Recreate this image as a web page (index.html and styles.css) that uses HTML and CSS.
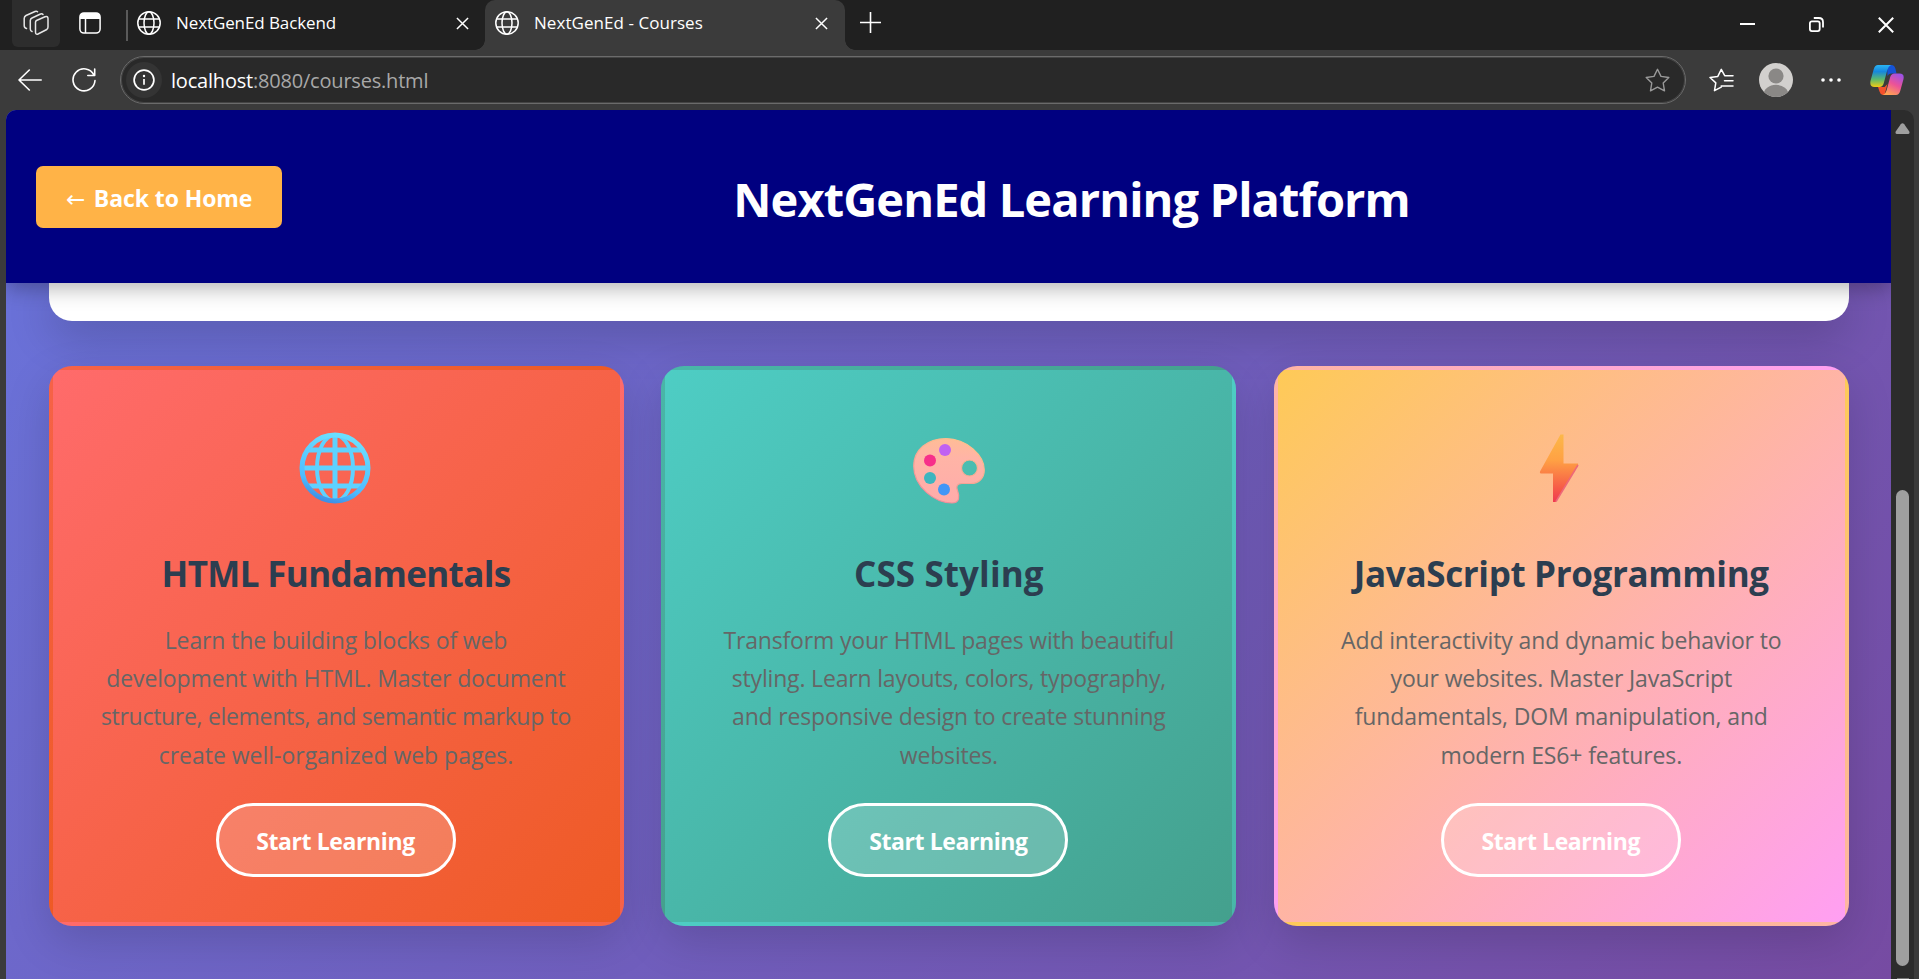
FILE: index.html
```html
<!DOCTYPE html>
<html lang="en">
<head>
<meta charset="utf-8">
<title>NextGenEd - Courses</title>
<link rel="stylesheet" href="styles.css">
</head>
<body>
<svg class="defs" aria-hidden="true">
  <defs>
    <symbol id="globe" viewBox="0 0 24 24"><g fill="none" stroke="#fff" stroke-width="1.5"><circle cx="12" cy="12" r="11.2"/><ellipse cx="12" cy="12" rx="5" ry="11.2"/><path d="M2 8h20M2 16h20"/></g></symbol>
    <symbol id="x" viewBox="0 0 14 14"><path d="M1 1l12 12M13 1L1 13" fill="none" stroke="#fff" stroke-width="1.6"/></symbol>
  </defs>
</svg>
<div class="window">
  <div class="tabstrip">
    <div class="workspaces">
      <svg width="26" height="26" viewBox="0 0 26 26" fill="none" stroke="#e6e6e6" stroke-width="1.5" stroke-linejoin="round" stroke-linecap="round"><path d="M12.5 12.2Q12.5 11 13.5 10.5L22 6.8Q25 5.8 25 8.5V17Q25 18.700 23.800 19.500L15 24Q12.500 25 12.500 22Z"/><path d="M20 4.500Q19 3.200 17.500 4L9 8Q7.300 8.800 7.300 10.500V19Q7.300 21 9 21.500"/><path d="M14.500 1.800Q13.500 .8 12 1.500L3 5.500Q1.200 6.500 1.200 8.500V15.500Q1.200 18 3.500 18.500"/></svg>
    </div>
    <svg class="tab-actions" width="22" height="22" viewBox="0 0 22 22"><rect x=".9" y=".9" width="20.200" height="20.200" rx="4" fill="none" stroke="#fff" stroke-width="1.500"/><path d="M1 7V4.500Q1 1 4.500 1h13Q21 1 21 4.500V7Z" fill="#fff"/><path d="M6.500 7v14" stroke="#fff" stroke-width="1.500"/></svg>
    <div class="divider"></div>
    <div class="tab tab-idle">
      <svg width="24" height="24"><use href="#globe"/></svg>
      <span class="tab-title">NextGenEd Backend</span>
      <svg width="13" height="13"><use href="#x"/></svg>
    </div>
    <div class="tab tab-active">
      <svg width="24" height="24"><use href="#globe"/></svg>
      <span class="tab-title tab-title-active">NextGenEd - Courses</span>
      <svg width="13" height="13"><use href="#x"/></svg>
    </div>
    <svg class="plus" width="21" height="21" viewBox="0 0 21 21"><path d="M10.500 0v21M0 10.500h21" stroke="#fff" stroke-width="1.600"/></svg>
    <div class="controls">
      <svg width="15" height="15" viewBox="0 0 15 15"><path d="M0 7h15" stroke="#fff" stroke-width="2"/></svg>
      <svg width="15" height="15" viewBox="0 0 15 15" fill="none" stroke="#fff" stroke-width="1.800"><rect x=".9" y="4.300" width="9.800" height="9.800" rx="2"/><path d="M4.800 1h5Q14 1 14 5.200V10.500"/></svg>
      <svg width="16" height="16" viewBox="0 0 16 16"><path d="M.8.8l14.400 14.400M15.200.8L.8 15.200" stroke="#fff" stroke-width="2"/></svg>
    </div>
  </div>

  <div class="toolbar">
    <svg class="nav-back" width="24" height="22" viewBox="0 0 24 22" fill="none" stroke="#fff" stroke-width="1.600" stroke-linecap="round" stroke-linejoin="round"><path d="M23.200 11H1M11.300 1L1 11l10.300 10"/></svg>
    <svg class="nav-reload" width="24" height="24" viewBox="0 0 24 24" fill="none" stroke="#fff" stroke-width="1.600" stroke-linecap="round" stroke-linejoin="round"><path d="M21.900 7A11 11 0 1 0 23 12.500M22.700 1v6.500H15.800"/></svg>
    <div class="address">
      <div class="site-info"><svg width="22" height="22" viewBox="0 0 22 22"><circle cx="11" cy="11" r="9.900" fill="none" stroke="#fff" stroke-width="1.700"/><path d="M11 10v5.800" stroke="#fff" stroke-width="1.700"/><circle cx="11" cy="7" r="1.200" fill="#fff"/></svg></div>
      <span class="url"><span class="host">localhost</span>:8080/courses.html</span>
      <svg class="star" width="25" height="24" viewBox="0 0 25 24"><path d="M12.500 1.300l3.500 7.100 7.800 1.100-5.600 5.500 1.300 7.800-7-3.700-7 3.700 1.300-7.800L1.200 9.500 9 8.400z" fill="none" stroke="#9a9a9a" stroke-width="1.400" stroke-linejoin="round"/></svg>
    </div>
    <svg class="favs" width="25" height="24" viewBox="0 0 25 24" fill="none" stroke="#fff" stroke-width="1.500" stroke-linecap="round" stroke-linejoin="round"><path d="M12.200 19.200l-6.700 3.500 1.300-7.800L1 9.500l7.800-1.100 3.500-7.100 3.400 6.400M15.700 7.700H24M15.500 12.800H24M12.200 18H24"/></svg>
    <svg class="avatar" width="34" height="34" viewBox="0 0 34 34"><defs><clipPath id="av"><circle cx="17" cy="17" r="17"/></clipPath></defs><g clip-path="url(#av)"><rect width="34" height="34" fill="#d2d0ce"/><circle cx="17" cy="13" r="7.600" fill="#8a8886"/><ellipse cx="17" cy="32" rx="12.500" ry="10.200" fill="#8a8886"/></g></svg>
    <svg class="dots" width="20" height="4" viewBox="0 0 20 4" fill="#fff"><circle cx="2" cy="2" r="1.800"/><circle cx="10" cy="2" r="1.800"/><circle cx="18" cy="2" r="1.800"/></svg>
    <svg class="copilot" width="34" height="30" viewBox="0 0 34 30">
      <defs>
        <linearGradient id="c1" x1="0" y1="0" x2="0" y2="1"><stop offset="0" stop-color="#2ab5f5"/><stop offset=".3" stop-color="#1687dd"/><stop offset=".65" stop-color="#5bb96e"/><stop offset="1" stop-color="#f2cb13"/></linearGradient>
        <linearGradient id="c2" x1=".8" y1="0" x2=".3" y2="1"><stop offset="0" stop-color="#9a52e8"/><stop offset=".5" stop-color="#ec5298"/><stop offset="1" stop-color="#ffa552"/></linearGradient>
      </defs>
      <path d="M17 0h4.500Q24.500 0 25.500 4L26.500 8.500H21Q18.500 8.500 17.500 11z" fill="#1553d6"/>
      <path d="M8 22h6.500l3-3L14.500 30Q10.500 30.500 9.500 26.500z" fill="#f4512c"/>
      <path d="M8 0H21Q18.500 1 17.300 5L13.800 18Q12.800 22 9.500 22H4.500Q-.8 22 .6 15.500L3.800 4Q5 0 8 0z" fill="url(#c1)"/>
      <path d="M26 30H12.800Q15.500 29 16.700 25L20.200 12Q21.300 8.500 24.500 8.500H29.500Q34.800 8.500 33.400 14.500L30.200 26Q29 30 26 30z" fill="url(#c2)"/>
    </svg>
  </div>

  <div class="viewport">
    <main class="page">
      <header class="header">
        <a class="back"><span class="arrow">←</span> Back to Home</a>
        <h1 class="title">NextGenEd Learning Platform</h1>
      </header>
      <div class="container">
        <section class="intro"></section>
        <section class="cards">
          <article class="card card-html">
            <svg class="icon" width="72" height="72" viewBox="0 0 72 72" fill="none">
              <defs><linearGradient id="g" x1=".65" y1="0" x2=".35" y2="1"><stop offset="0" stop-color="#6ce0ff"/><stop offset=".75" stop-color="#4dbcff"/><stop offset="1" stop-color="#3f90e6"/></linearGradient></defs>
              <g stroke="#5ed2ff" stroke-width="5"><path d="M36 4v64M4 36h64M9 18h54M9 54h54"/><ellipse cx="36" cy="36" rx="18" ry="33" stroke-width="4"/></g>
              <circle cx="36" cy="36" r="33" stroke="url(#g)" stroke-width="5"/>
            </svg>
            <h2 class="card-title">HTML Fundamentals</h2>
            <p class="card-text">Learn the building blocks of web<br>development with HTML. Master document<br><span class="tight">structure, elements, and semantic markup to</span><br><span class="loose">create well-organized web pages.</span></p>
            <a class="start">Start Learning</a>
          </article>
          <article class="card card-css">
            <svg class="icon" width="72" height="72" viewBox="0 0 72 72">
              <defs>
                <linearGradient id="p" x1="0" y1="0" x2="0" y2="1"><stop offset="0" stop-color="#ffbc96"/><stop offset=".3" stop-color="#ffb4a6"/><stop offset="1" stop-color="#ffabaa"/></linearGradient>
                <linearGradient id="pe" x1=".8" y1="0" x2=".3" y2="1"><stop offset="0" stop-color="#ffc58b"/><stop offset="1" stop-color="#ef8a9c"/></linearGradient>
              </defs>
              <path fill-rule="evenodd" fill="url(#p)" stroke="url(#pe)" stroke-width="1.200" d="M33 6.600C54 6.600 71.300 24 71.300 38C71.300 46 66 51.500 58 51.500H49C44 51.500 42.800 54.500 44.500 58.500C46.500 64 47 71 39 71C22 71 .7 55 .7 34C.7 18 14 6.600 33 6.600ZM56.500 28A8 8 0 1 0 56.500 44A8 8 0 1 0 56.500 28Z"/>
              <circle cx="32" cy="18" r="6" fill="#c061f2"/><circle cx="17" cy="28.500" r="6" fill="#f72f8a"/><circle cx="17" cy="46" r="6" fill="#3db5bf"/><circle cx="31" cy="57.500" r="6" fill="#4296f7"/>
            </svg>
            <h2 class="card-title">CSS Styling</h2>
            <p class="card-text">Transform your HTML pages with beautiful<br>styling. Learn layouts, colors, typography,<br>and responsive design to create stunning<br>websites.</p>
            <a class="start">Start Learning</a>
          </article>
          <article class="card card-js">
            <svg class="icon" width="72" height="72" viewBox="0 0 72 72">
              <defs><linearGradient id="b" x1="0" y1="0" x2="0" y2="1"><stop offset="0" stop-color="#fcb849"/><stop offset=".38" stop-color="#ffa144"/><stop offset=".8" stop-color="#f65a48"/><stop offset="1" stop-color="#ef3a50"/></linearGradient></defs>
              <path d="M36.500 2.500H39.500V31.500H54Q54.500 32 54 33L32 69.500Q31.500 70.200 29 70V41.500H17Q15.300 41.500 16 39.500z" fill="url(#b)"/>
              <path d="M54 33L32 69.500" stroke="#ee6878" stroke-width="1.500"/>
            </svg>
            <h2 class="card-title">JavaScript Programming</h2>
            <p class="card-text">Add interactivity and dynamic behavior to<br>your websites. Master JavaScript<br>fundamentals, DOM manipulation, and<br>modern ES6+ features.</p>
            <a class="start">Start Learning</a>
          </article>
        </section>
      </div>
    </main>
    <div class="scrollbar">
      <svg width="15" height="11" viewBox="0 0 15 11"><path d="M5.800 1.200Q7.500-.8 9.200 1.200L14.300 8.500Q15 11 13 11H2Q0 11 .7 8.500z" fill="#9f9f9f"/></svg>
      <div class="thumb"></div>
      <div class="down"></div>
    </div>
  </div>
</div>
</body>
</html>
```

FILE: styles.css
```css
* { box-sizing: border-box; }
html, body { margin: 0; height: 100%; overflow: hidden; }
body { font-family: "Open Sans", "Noto Sans", sans-serif; background: #3b3b3b; }
svg { display: block; flex: none; }
.defs { position: absolute; width: 0; height: 0; }

.window { display: flex; flex-direction: column; width: 1919px; height: 979px; }

/* Tab strip */
.tabstrip { display: flex; height: 50px; background: #202020; }
.workspaces { width: 48px; height: 47px; margin-left: 12px; padding: 10px 0 0 11px; border-radius: 0 0 6px 6px; background: #2d2d2d; }
.tab-actions { margin: 12px 0 0 19px; }
.divider { width: 2px; height: 31px; margin: 10px 0 0 25px; background: #5a5a5a; }
.tab { display: flex; align-items: center; height: 50px; padding-bottom: 4px; }
.tab-idle { width: 357px; padding-left: 9px; }
.tab-idle .tab-title { width: 280px; }
.tab-active { position: relative; width: 360px; padding-left: 10px; background: #3b3b3b; border-radius: 10px 10px 0 0; }
.tab-active::before, .tab-active::after { content: ""; position: absolute; bottom: 0; width: 10px; height: 10px; }
.tab-active::before { left: -10px; background: radial-gradient(circle at 0 0, transparent 9.500px, #3b3b3b 10px); }
.tab-active::after { right: -10px; background: radial-gradient(circle at 100% 0, transparent 9.500px, #3b3b3b 10px); }
.tab-title { width: 281px; margin-left: 15px; padding-bottom: 1px; font-size: 17px; letter-spacing: -0.1px; color: #fff; white-space: nowrap; }
.tab-title-active { letter-spacing: 0.05px; }
.tab-title + svg { margin-top: 1px; }
.plus { margin: 12px 0 0 15px; }
.controls { display: flex; gap: 54px; margin: 17px 25px 0 auto; }

/* Toolbar */
.toolbar { display: flex; align-items: center; height: 60px; background: #3b3b3b; }
.nav-back { margin-left: 18px; }
.nav-reload { margin-left: 30px; }
.address { display: flex; align-items: center; width: 1566px; height: 48px; margin-left: 24px; padding-left: 5px; border: 1px solid #6b6b6b; border-radius: 24px; background: #292929; box-shadow: inset 0 0 0 1px #444; }
.site-info { display: flex; align-items: center; justify-content: center; width: 36px; height: 36px; border-radius: 50%; background: #343434; }
.url { margin-left: 9px; font-size: 20px; letter-spacing: -0.2px; color: #a8a8a8; white-space: nowrap; }
.host { color: #fff; }
.star { margin: 0 15px 0 auto; }
.favs { margin-left: 23px; }
.avatar { margin-left: 25px; }
.dots { margin-left: 28px; }
.copilot { margin-left: 29px; }

/* Web page */
.viewport { display: flex; height: 869px; padding: 0 5px 0 6px; }
.page { width: 1885px; overflow: hidden; border-radius: 10px 0 0 0; background: linear-gradient(135deg, #667eea 0%, #764ba2 100%) bottom / 100% 1512px no-repeat; }
.header { position: relative; z-index: 1; display: flex; height: 173px; padding: 56px 30px 0; background: #000080; box-shadow: 0 5px 20px rgba(0, 0, 0, .3); }
.back { width: 246px; height: 62px; padding-left: 30px; border-radius: 7px; background: #ffb347; color: #fff; font-size: 23px; font-weight: 700; line-height: 64px; letter-spacing: -0.1px; white-space: nowrap; }
.arrow { display: inline-block; width: 22px; font-family: "DejaVu Sans", sans-serif; font-size: 23px; font-weight: 400; line-height: 1; }
.title { flex: 1; margin: 0; color: #fff; font-size: 47px; font-weight: 700; line-height: 66px; letter-spacing: -0.9px; text-align: center; white-space: nowrap; }
.container { width: 1800px; margin-left: 43px; }
.intro { height: 38px; border-radius: 0 0 23px 23px; background: #fff; box-shadow: 0 15px 45px rgba(0, 0, 0, .2); }
.cards { display: grid; grid-template-columns: repeat(3, 575px); gap: 37.400px; margin-top: 45px; }
.card { position: relative; display: flex; flex-direction: column; align-items: center; height: 560px; padding: 62px 1px 0 0; border: 4px solid transparent; border-radius: 23px; box-shadow: 0 15px 45px rgba(0, 0, 0, .15); text-align: center; }
.card-html { padding-right: 2px; background-image: linear-gradient(135deg, #ff6b6b, #ee5a24); }
.card-css { background-image: linear-gradient(135deg, #4ecdc4, #44a08d); }
.card-js { background-image: linear-gradient(135deg, #feca57, #ff9ff3); }
.icon { margin-right: 1px; }
.card-css .icon { margin-right: -1px; }
.card-title { margin: 45px -1px 0 0; color: #2c3e50; font-size: 35px; font-weight: 700; line-height: 50px; letter-spacing: -0.65px; white-space: nowrap; }
.card-css .card-title { letter-spacing: 0.1px; }
.card-js .card-title { letter-spacing: -0.35px; }
.card-text { margin: 21.500px -1px 0 0; color: #666; font-size: 23px; line-height: 38.400px; letter-spacing: -0.13px; white-space: nowrap; }
.card-css .card-text { letter-spacing: -0.18px; }
.tight { letter-spacing: -0.3px; }
.loose { letter-spacing: -0.02px; }
.start { width: 240px; height: 74px; margin-top: 28.500px; border: 3px solid #fff; border-radius: 37px; background: rgba(255, 255, 255, .2); color: #fff; font-size: 23px; font-weight: 700; line-height: 70px; letter-spacing: -0.4px; white-space: nowrap; }

/* Scrollbar */
.scrollbar { display: flex; flex-direction: column; align-items: center; width: 23px; padding-top: 13px; border-radius: 0 10px 0 0; background: #2c2c2c; }
.thumb { width: 13px; height: 476px; margin-top: 356px; border-radius: 7px; background: #9f9f9f; }
.down { width: 12px; height: 1px; margin-top: 12px; background: #777; }
```
